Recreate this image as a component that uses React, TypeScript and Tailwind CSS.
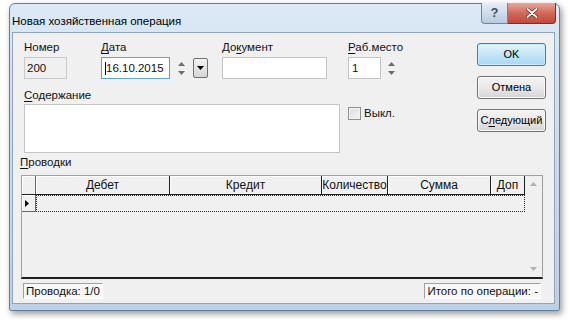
import React from 'react'

const font = "font-['Liberation_Sans',Arial,sans-serif]"

const U = ({ children }: { children: React.ReactNode }) => (
  <span className="underline decoration-1 underline-offset-[2px]">{children}</span>
)

const Spin = () => (
  <div className="flex flex-col items-center justify-center gap-[5px] w-[11px] h-[20px] mt-[1px]">
    <svg width="7" height="4" viewBox="0 0 7 4"><path d="M0 4 L3.5 0 L7 4 Z" fill="#6d6d6d" /></svg>
    <svg width="7" height="4" viewBox="0 0 7 4"><path d="M0 0 L3.5 4 L7 0 Z" fill="#6d6d6d" /></svg>
  </div>
)

const Btn = ({ children, primary }: { children: React.ReactNode; primary?: boolean }) => (
  <div
    className={
      'w-[69px] h-[23px] rounded-[3px] border flex items-center justify-center text-[11px] text-black whitespace-nowrap ' +
      (primary
        ? 'border-[#3c7fb1] bg-gradient-to-b from-[#e5f4fc] via-[#c4e5f6] to-[#a9daf3] shadow-[inset_0_0_0_1px_#c8ecff]'
        : 'border-[#707070] bg-gradient-to-b from-[#f4f4f4] via-[#e9e9e9] to-[#d4d4d4] shadow-[inset_0_0_0_1px_#fbfbfb]')
    }
  >
    {children}
  </div>
)

const cols = [
  { name: 'Дебет', w: 'w-[134px]' },
  { name: 'Кредит', w: 'w-[152px]' },
  { name: 'Количество', w: 'w-[66px]' },
  { name: 'Сумма', w: 'w-[103px]' },
  { name: 'Доп', w: 'w-[34px]' },
]

export default function App() {
  return (
    <div className={`w-[570px] h-[324px] bg-white overflow-hidden pt-[3px] ${font}`}>
      {/* window frame */}
      <div className="ml-[9px] w-[551px] h-[308px] rounded-t-[6px] rounded-b-[2px] border border-[#62809e] bg-gradient-to-b from-[#dce9f6] via-[#c9dbee] to-[#bcd0e7] shadow-[2px_3px_6px_rgba(0,0,0,0.4)] flex flex-col">
        {/* title bar */}
        <div className="h-[28px] flex items-start pl-[2px] pr-[3px]">
          <div className="text-[11.5px] text-black pt-[9px]">Новая хозяйственная операция</div>
          <div className="ml-auto flex -mt-[1px]">
            <div className="w-[27px] h-[21px] rounded-bl-[4px] border border-t-0 border-[#6e87a0] bg-gradient-to-b from-[#e6eef7] to-[#b7cbe0] flex items-center justify-center text-[13px] font-bold text-[#3e4f63]">?</div>
            <div className="w-[48px] h-[21px] rounded-br-[4px] border border-t-0 border-l-0 border-[#7a2d25] bg-gradient-to-b from-[#e7a89c] via-[#d0685a] to-[#c24a3a] flex items-center justify-center">
              <svg width="12" height="10" viewBox="0 0 12 10">
                <path d="M1.5 1 L10.5 9 M10.5 1 L1.5 9" stroke="#5a1d16" strokeWidth="3.2" strokeLinecap="round" />
                <path d="M1.5 1 L10.5 9 M10.5 1 L1.5 9" stroke="#ffffff" strokeWidth="1.9" strokeLinecap="round" />
              </svg>
            </div>
          </div>
        </div>

        {/* client area */}
        <div className="ml-[2px] w-[543px] h-[272px] border border-[#8ea4bb] bg-[#f0f0f0] text-[11.5px] text-[#111]">
          <div className="flex h-[122px]">
            {/* form */}
            <div className="w-[420px] pl-[11px]">
              <div className="flex mt-[8px]">
                <div className="flex flex-col">
                  <span className="h-[16px] leading-[13px]">Номер</span>
                  <div className="w-[43px] h-[22px] border border-[#c9c9c9] bg-[#f0f0f0] pl-[2px] leading-[20px]">200</div>
                </div>
                <div className="flex flex-col ml-[34px]">
                  <span className="h-[16px] leading-[13px]"><U>Д</U>ата</span>
                  <div className="flex">
                    <div className="w-[69px] h-[22px] border border-[#5ea1dc] bg-white pl-[3px] flex items-center">
                      <span className="w-[1px] h-[13px] bg-black" />
                      <span className="leading-[20px]">16.10.2015</span>
                    </div>
                    <div className="ml-[6px]"><Spin /></div>
                    <div className="ml-[6px] mt-[1px] w-[15px] h-[20px] rounded-[2px] border border-[#707070] bg-gradient-to-b from-[#f3f3f3] to-[#d6d6d6] flex items-center justify-center">
                      <svg width="7" height="4" viewBox="0 0 7 4"><path d="M0 0 L3.5 4 L7 0 Z" fill="#000" /></svg>
                    </div>
                  </div>
                </div>
                <div className="flex flex-col ml-[14px]">
                  <span className="h-[16px] leading-[13px]">До<U>к</U>умент</span>
                  <div className="w-[105px] h-[22px] border border-[#c4c4c4] bg-white" />
                </div>
                <div className="flex flex-col ml-[21px]">
                  <span className="h-[16px] leading-[13px]"><U>Р</U>аб.место</span>
                  <div className="flex">
                    <div className="w-[33px] h-[22px] border border-[#c4c4c4] bg-white pl-[3px] leading-[20px]">1</div>
                    <div className="ml-[5px]"><Spin /></div>
                  </div>
                </div>
              </div>

              <div className="flex mt-[10px]">
                <div className="flex flex-col">
                  <span className="h-[15px] leading-[13px]"><U>С</U>одержание</span>
                  <div className="w-[316px] h-[49px] border border-[#c4c4c4] bg-white" />
                </div>
                <div className="flex items-center ml-[8px] mt-[17px] self-start">
                  <div className="w-[13px] h-[13px] border border-[#8f8f8f] bg-gradient-to-br from-[#dcdcdc] to-[#f6f6f6] shadow-[inset_0_0_0_1px_#f4f4f4]" />
                  <span className="ml-[3px] leading-[14px]">Выкл.</span>
                </div>
              </div>
            </div>

            {/* buttons */}
            <div className="ml-auto mr-[8px] flex flex-col gap-[10px] mt-[10px]">
              <Btn primary>OK</Btn>
              <Btn>Отмена</Btn>
              <Btn>С<U>л</U>едующий</Btn>
            </div>
          </div>

          <div className="pl-[7px] h-[20px] leading-[14px]"><U>П</U>роводки</div>

          {/* grid */}
          <div className="ml-[8px] w-[522px] h-[104px] border-l border-t border-r border-[#a0a0a0] border-b-2 border-b-[#1e1e1e] flex">
            <div className="flex flex-col w-[503px]">
              <div className="flex h-[19px] border-b border-[#1e1e1e] bg-[#f0f0f0] text-[12px]">
                <div className="w-[14px] border-r border-[#6a6a6a] shadow-[inset_1px_1px_0_#ffffff]" />
                {cols.map((c) => (
                  <div key={c.name} className={`${c.w} border-r border-[#1e1e1e] text-center leading-[18px] whitespace-nowrap shadow-[inset_1px_1px_0_#ffffff]`}>
                    {c.name}
                  </div>
                ))}
              </div>
              <div className="flex h-[17px]">
                <div className="w-[14px] border-r border-b border-[#6a6a6a] bg-[#f0f0f0] shadow-[inset_1px_1px_0_#ffffff] flex items-center pl-[3px]">
                  <svg width="4" height="7" viewBox="0 0 4 7"><path d="M0 0 L4 3.5 L0 7 Z" fill="#000" /></svg>
                </div>
                <div className="w-[489px] border border-dotted border-[#2a2a2a]" />
              </div>
            </div>
            <div className="ml-auto w-[17px] flex flex-col items-center justify-between py-[6px] bg-[#f0f0f0]">
              <svg width="7" height="4" viewBox="0 0 7 4"><path d="M0 4 L3.5 0 L7 4 Z" fill="#b0b0b0" /></svg>
              <svg width="7" height="4" viewBox="0 0 7 4"><path d="M0 0 L3.5 4 L7 0 Z" fill="#b0b0b0" /></svg>
            </div>
          </div>

          {/* status bar */}
          <div className="flex items-center ml-[10px] w-[518px] mt-[4px] text-[11.5px]">
            <div className="h-[16px] px-[2px] border-t border-l border-[#a0a0a0] border-b border-r border-b-white border-r-white bg-[#f8f8f8] leading-[14px]">Проводка: 1/0</div>
            <div className="ml-auto h-[16px] px-[2px] border-t border-l border-[#a0a0a0] border-b border-r border-b-white border-r-white bg-[#f8f8f8] leading-[14px]">Итого по операции: -</div>
          </div>
        </div>
      </div>
    </div>
  )
}
